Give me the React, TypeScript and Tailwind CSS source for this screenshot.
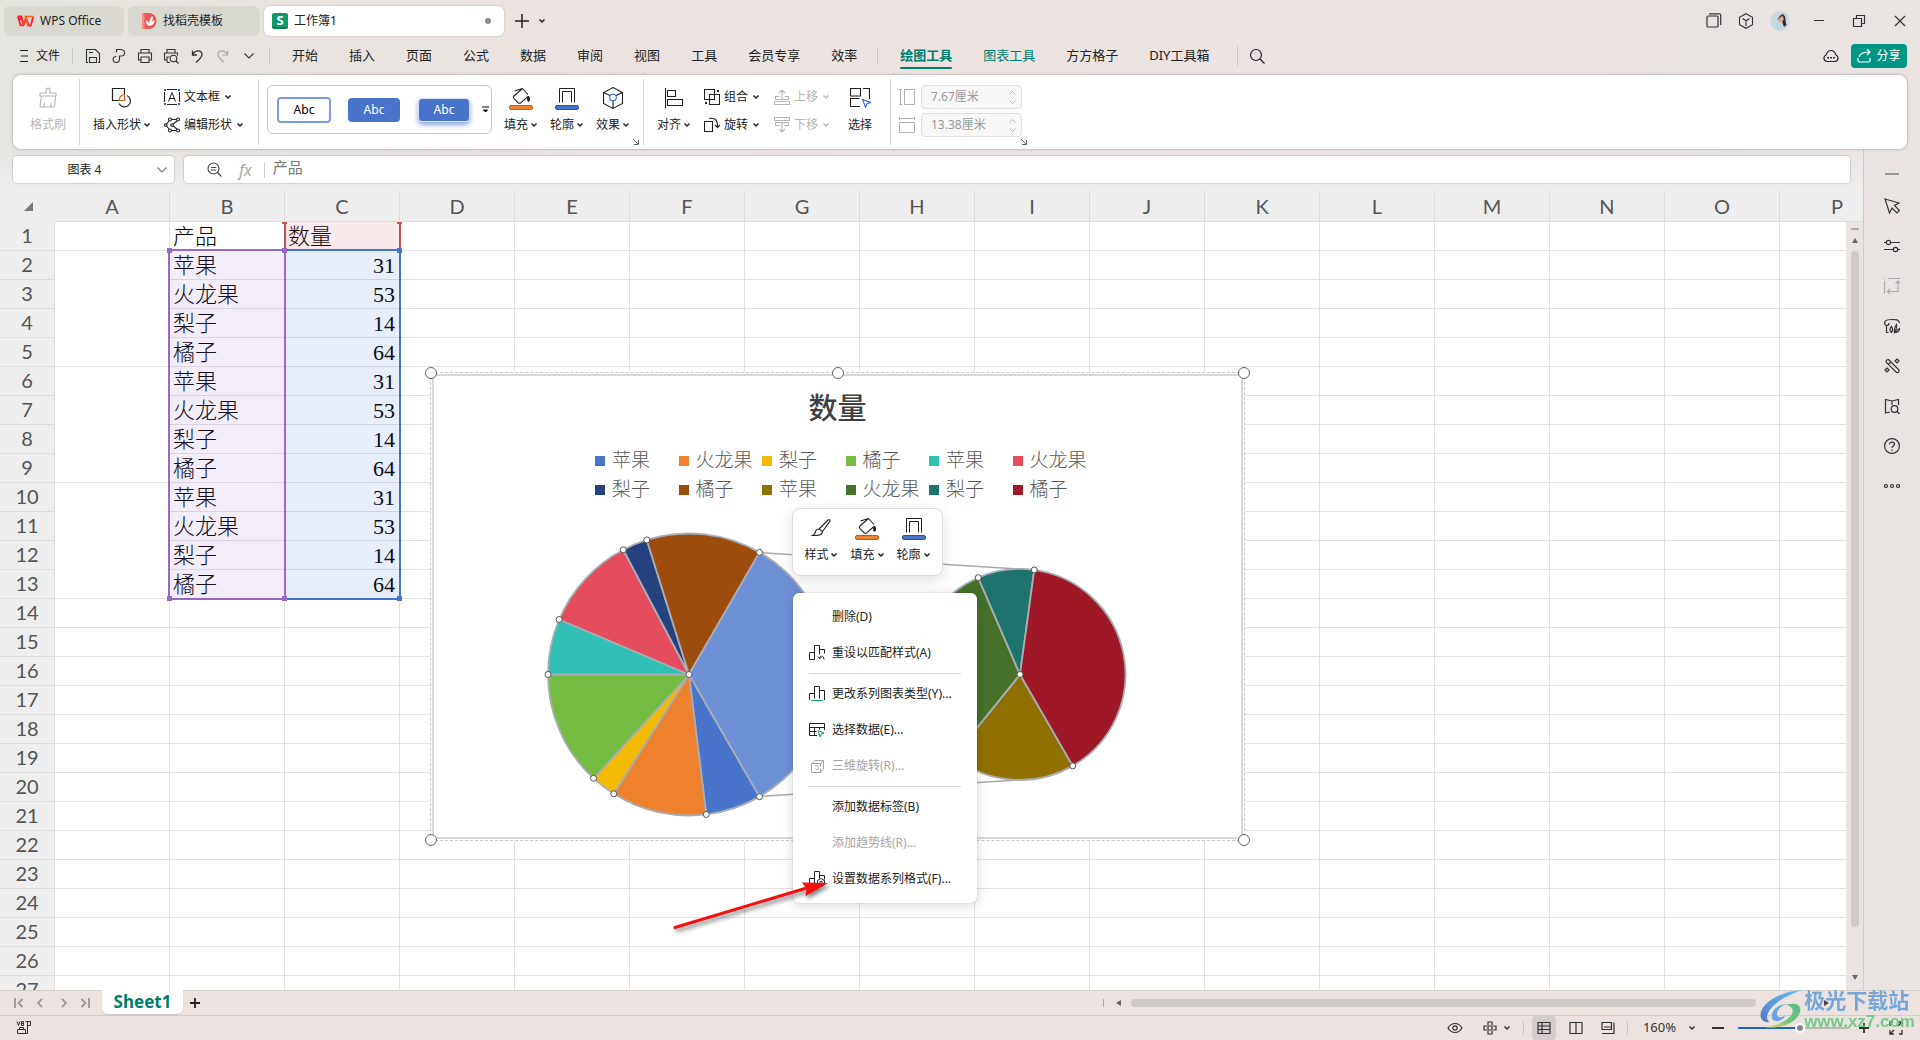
import type { ReactNode } from "react";
import { useState } from "react";

const COLUMNS = ["A", "B", "C", "D", "E", "F", "G", "H", "I", "J", "K", "L", "M", "N", "O", "P"];
const ROWS = Array.from({ length: 27 }, (_, i) => i + 1);
const FRUITS: [string, number][] = [
    ["苹果", 31],
    ["火龙果", 53],
    ["梨子", 14],
    ["橘子", 64],
];
const COLORS = [
    "#4874cb", "#ee822f", "#f2ba02", "#75bd42", "#30c0b4", "#e54c5e",
    "#25417f", "#9c4c0d", "#907000", "#457128", "#1e736c", "#9e1827",
];
const MENUS = ["开始", "插入", "页面", "公式", "数据", "审阅", "视图", "工具", "会员专享", "效率"];

type IconProps = { w?: number; h?: number; className?: string; sw?: number; children: ReactNode };

const Icon = ({ w = 16, h = w, className = "", sw = 1, children }: IconProps) => (
    <svg
        width={w}
        height={h}
        viewBox={`0 0 ${w} ${h}`}
        fill="none"
        stroke="currentColor"
        strokeWidth={sw}
        className={`shrink-0 ${className}`}
        aria-hidden="true"
    >
        {children}
    </svg>
);

const Chevron = () => (
    <Icon w={8} h={6} sw={1.5}>
        <path d="M1.5 1.5 4 4l2.5-2.5" />
    </Icon>
);

const WideChevron = () => (
    <Icon w={12} h={8} sw={1.1}>
        <path d="m1.5 1.5 4.5 4.5 4.5-4.5" />
    </Icon>
);

const Launcher = ({ className }: { className: string }) => (
    <button aria-label="更多选项" className={`absolute text-[#666] ${className}`}>
        <Icon w={6}>
            <path d="m0 0 5 5M5.5 1v4.5H1" />
        </Icon>
    </button>
);

/* ---------- title bar ---------- */

const TitleBar = () => (
    <header className="flex shrink-0 items-center pt-[6px] pl-1 text-xs text-[#222]">
        <button className="flex h-[30px] w-[120px] items-center gap-1.5 rounded-md bg-[#dad9d1] pl-[13px]">
            <Icon w={17} h={12}>
                <path d="M0.8 1.5h3.6l2 8.5M4.4 1.5 3 5M0.8 1.5 3.6 10.3h2.8L9 3.5l2.4 7h2.4l2.4-9" stroke="#f5222d" strokeWidth="1.8" />
                <path d="M5.5 10.3 9 2.2l3 8M7.6 1.5h8.6" stroke="#ff5a1f" strokeWidth="1.5" />
            </Icon>
            <span>WPS Office</span>
        </button>
        <button className="ml-1 flex h-[30px] w-[132px] items-center gap-1.5 rounded-md bg-[#dad9d1] pl-3.5">
            <Icon w={15} h={16} sw={0}>
                <path d="M0 0h7a7.5 8 0 0 1 0 16H0z" fill="#ef5558" />
                <path d="M0 0h2.5v16H0z" fill="#f58f8f" />
                <path d="M7.5 13C4.5 12 3.5 9.5 4 7.5c2 .5 3 2 3.5 3.5C7 8 8 4.5 10.500 3c.8 2 .3 4-1 6 1-1 2.200-1.500 3.200-1.400-.2 3-2 5-5.200 5.400z" fill="#fff" />
            </Icon>
            <span>找稻壳模板</span>
        </button>
        <div className="ml-1 flex h-[30px] w-[240px] items-center rounded-md bg-white pr-[13px] pl-2 shadow-[0_0_2px_rgba(0,0,0,0.25)]">
            <span className="flex size-4 items-center justify-center rounded-xs border-b-2 border-[#0b7a50] bg-[#12996a] text-[13px] leading-3 font-bold text-white">
                S
            </span>
            <span className="ml-1.5 flex-1">工作簿1</span>
            <span className="size-1.5 rounded-full bg-[#8c8c8c]" />
        </div>
        <button aria-label="新建" className="ml-[11px]">
            <Icon w={14} sw={1.5}>
                <path d="M7 0v14M0 7h14" />
            </Icon>
        </button>
        <button aria-label="标签列表" className="ml-[9px]">
            <Chevron />
        </button>
        <div className="ml-auto flex items-center pr-[14px] text-[#333]">
            <button aria-label="窗口">
                <Icon w={16} sw={1.2}>
                    <rect x="1" y="3" width="11" height="11" rx="1" />
                    <path d="M3 .8h10.500a1.200 1.200 0 0 1 1.200 1.200v10" />
                </Icon>
            </button>
            <button aria-label="应用" className="ml-4">
                <Icon w={16} sw={1.1}>
                    <path d="M8 .7 14.500 4.300v7.400L8 15.300 1.500 11.700V4.300zM4.500 5.500 8 7.800l3.500-2.300M8 7.800V13" />
                </Icon>
            </button>
            <button aria-label="账户" className="ml-4">
                <Icon w={20} sw={0}>
                    <circle cx="10" cy="10" r="10" fill="#cdd9e1" />
                    <path d="M11 4c4-1 5 3 4.500 6l1 4-2.500 2-2.500-7z" fill="#33272c" />
                    <path d="M10 5c3-1 4 1 3.500 4l-2 2.500-3.500-1z" fill="#d9a99b" />
                    <path d="M10 4.500 13 3l1.500 1.500-3.500 1.200L7 9.500z" fill="#4a3a36" />
                    <path d="m7 10 4 2 2 7-8-1z" fill="#bfd6df" />
                </Icon>
            </button>
            <button aria-label="最小化" className="ml-6">
                <Icon w={10}>
                    <path d="M0 4.500h10" />
                </Icon>
            </button>
            <button aria-label="还原" className="ml-7">
                <Icon w={14} sw={1.2}>
                    <path d="M1.500 4.500h8v8h-8zM4.500 4.500v-3h8v8h-3" />
                </Icon>
            </button>
            <button aria-label="关闭" className="ml-7">
                <Icon w={12} sw={1.2}>
                    <path d="m1 1 10 10M11 1 1 11" />
                </Icon>
            </button>
        </div>
    </header>
);

/* ---------- menu row ---------- */

const MenuRow = () => (
    <nav className="flex h-[39px] shrink-0 items-center text-[13px] text-[#222]">
        <button className="ml-5 flex items-center gap-2 text-xs">
            <Icon w={8} h={12}>
                <path d="M0 .5h8M1 6h7M0 11.500h8" />
            </Icon>
            文件
        </button>
        <span className="ml-3 h-4 w-px bg-[#c9c7c3]" />
        <div className="ml-3 flex items-center gap-2.5 text-[#333]">
            <button aria-label="保存">
                <Icon sw={1.1}>
                    <path d="M3 14.500H1.500V1.500h9L14.500 5.500v9H13M4.500 14.500v-5h7v5zM4 4.500h4" />
                </Icon>
            </button>
            <button aria-label="输出为PDF">
                <Icon sw={1.1}>
                    <path d="M5.500 4.500v-3h4.500c5 .5 4.500 6.500 0 6.500H8.500v3c0 4.500-6.500 4.500-6.500.500 0-2 1.500-3 3.500-3" />
                </Icon>
            </button>
            <button aria-label="打印">
                <Icon sw={1.1}>
                    <path d="M4 5V1.500h8V5M4 12H1.500V5h13v7H12M4 9h8v5.500H4z" />
                </Icon>
            </button>
            <button aria-label="打印预览">
                <Icon sw={1.1}>
                    <path d="M4 5V1.500h8V5M4 12H1.500V5h13v2.500M4 14.500V9h2.500M4 14.500h3" />
                    <circle cx="10.500" cy="10.500" r="3.300" />
                    <path d="m13 13 2.500 2.500" />
                </Icon>
            </button>
            <button aria-label="撤销">
                <Icon sw={1.3}>
                    <path d="M3.500 2.500v4.500H8M3.500 7C6 1.500 13 1.500 13 6.500c0 3-3.500 5.500-6 8" />
                </Icon>
            </button>
            <button aria-label="恢复" disabled className="text-[#aaa]">
                <Icon sw={1.2}>
                    <path d="M12.500 2.500v4.500H8M12.500 7C10 1.500 3 1.500 3 6.500c0 3 3.500 5.500 6 8" />
                </Icon>
            </button>
            <button aria-label="自定义" className="ml-0.5">
                <WideChevron />
            </button>
        </div>
        <span className="ml-3.5 h-4 w-px bg-[#c9c7c3]" />
        <div className="ml-[22px] flex gap-[31px]">
            {MENUS.map((m) => (
                <button key={m}>{m}</button>
            ))}
        </div>
        <span className="ml-5 h-4 w-px bg-[#c9c7c3]" />
        <div className="ml-[22px] flex items-center gap-[31px]">
            <button className="relative font-bold text-[#007d6c]">
                绘图工具
                <span className="absolute inset-x-0 -bottom-1 h-0.5 rounded-full bg-[#007d6c]" />
            </button>
            <button className="text-[#007d6c]">图表工具</button>
            <button>方方格子</button>
            <button>DIY工具箱</button>
        </div>
        <span className="ml-7 h-5 w-px bg-[#c9c7c3]" />
        <button aria-label="查找" className="ml-[11px]">
            <Icon sw={1.2}>
                <circle cx="7" cy="7" r="5.500" />
                <path d="m11 11 4.500 4.500" />
            </Icon>
        </button>
        <button aria-label="云文档" className="ml-auto">
            <Icon w={16} sw={1.2}>
                <path d="M4 13.500a3.400 3.400 0 0 1-1-6.500C4 4 6 2.500 8 2.500S12 4 13 7a3.400 3.400 0 0 1-1 6.500z" />
                <path d="M4.200 9.700h1.800M7.100 9.700h1.800M10 9.700h1.800" strokeWidth="1.600" />
            </Icon>
        </button>
        <button className="mr-[13px] ml-3 flex h-6 w-14 items-center justify-center gap-1 rounded-sm bg-[#009684] text-xs text-white">
            <Icon w={15} h={14} sw={1.2}>
                <path d="M2 8c1-4 5-5 11-5M10 .5 13 3l-3 3M1 9v2.500c0 1 .5 1.500 1.500 1.500h9c1 0 1.500-.5 1.500-1.500V9" />
            </Icon>
            分享
        </button>
    </nav>
);

/* ---------- ribbon ---------- */

type ToolProps = { icon: ReactNode; label: string; arrow?: boolean; disabled?: boolean };

const BigTool = ({ icon, label, arrow = true, disabled }: ToolProps) => (
    <button disabled={disabled} className="flex flex-col items-center text-[#222] disabled:text-[#b5b5b5]">
        <span className="flex h-[26px] items-center">{icon}</span>
        <span className="flex h-7 items-center gap-0.5">
            {label}
            {arrow && <Chevron />}
        </span>
    </button>
);

const SmallTool = ({ icon, label, disabled }: ToolProps) => (
    <button disabled={disabled} className="flex h-7 items-center gap-1 text-[#222] disabled:text-[#b5b5b5]">
        {icon}
        {label}
        <Chevron />
    </button>
);

const Divider = () => <span className="my-1 w-px shrink-0 bg-[#d4d4d4]" />;

const FillIcon = () => (
    <Icon w={26}>
        <path d="M14.500 3.500 6 11q-1.300 1.300 0 2.700l4 4q1.500 1.200 3 0L20 11.500M14.500 3.500 20 9.500M6.500 6 14.500 3.500" strokeWidth="1.100" />
        <path d="M20.500 11c1.500 2 1.500 5 0 5.500-1.500-.5-1.200-3 0-5.500z" fill="currentColor" />
        <rect x="1.500" y="20.500" width="23" height="4" rx="1.500" fill="#f0832f" stroke="#b9601c" />
    </Icon>
);

const OutlineIcon = () => (
    <Icon w={26}>
        <path d="M5.500 17.500v-14h15v14M8.500 17.500v-11h9v11" />
        <rect x="1.500" y="20.500" width="23" height="4" rx="1.500" fill="#4874cb" stroke="#30549b" />
    </Icon>
);

const ShapeGallery = () => (
    <div className="mt-2.5 ml-2 flex h-[49px] w-[225px] items-center rounded-md border border-[#c4c4c4] pl-[9px]">
        <button className="h-[26px] w-[54px] rounded-sm border-2 border-[#7d9cda] bg-white text-black">Abc</button>
        <button className="ml-[17px] h-6 w-[52px] rounded-sm bg-[#4874cb] text-white">Abc</button>
        <button className="ml-[18px] h-6 w-[52px] rounded-sm border border-[#dbe4f5] bg-[#4874cb] text-white shadow-[0_3px_5px_#8ea9dd]">
            Abc
        </button>
        <button aria-label="更多样式" className="ml-3">
            <Icon w={7} h={8}>
                <path d="M0 1h7" />
                <path d="m1.500 4 2 2 2-2z" fill="currentColor" />
            </Icon>
        </button>
    </div>
);

const SizeField = ({ id, label, value, icon }: { id: string; label: string; value: string; icon: ReactNode }) => (
    <div className="flex h-7 items-center">
        <label htmlFor={id} aria-label={label} className="mr-[6px] text-[#b0b0b0]">
            {icon}
        </label>
        <div className="flex h-6 w-[101px] items-center rounded-sm border border-[#e0e0e0] bg-[#f8f8f8] pr-[5px] pl-[9px]">
            <input id={id} disabled defaultValue={value} className="w-full min-w-0 bg-transparent text-xs text-[#999]" />
            <span className="flex flex-col gap-[5px] text-[#b5b5b5]">
                <button aria-label="增大" disabled>
                    <Icon w={7} h={4}>
                        <path d="m.5 3.500 3-3 3 3" />
                    </Icon>
                </button>
                <button aria-label="减小" disabled>
                    <Icon w={7} h={4}>
                        <path d="m.5.5 3 3 3-3" />
                    </Icon>
                </button>
            </span>
        </div>
    </div>
);

const Ribbon = () => (
    <div className="relative z-10 mx-[13px] flex h-[74px] shrink-0 rounded-lg bg-white text-xs shadow-[0_0_3px_rgba(0,0,0,0.35)]">
        <div className="flex w-[66px] justify-center pt-2.5 pl-1">
            <BigTool
                label="格式刷"
                arrow={false}
                disabled
                icon={
                    <Icon w={20} h={22} sw={1.1}>
                        <path d="M2 9V7q0-1 1-1h5.500l-.5-3c0-2.500 4-2.500 4 0l-.5 3H17q1 0 1 1v2zM3.500 9 2 19q0 1 1 1h12.500q1 0 1.200-1L17.500 9M6 20l.5-4M12.500 20l.8-4" />
                    </Icon>
                }
            />
        </div>
        <Divider />
        <div className="flex w-[178px] pt-2.5 pl-[13px]">
            <BigTool
                label="插入形状"
                icon={
                    <Icon w={22} h={22} sw={1.2}>
                        <path d="M8 13.500H1.500v-12h12V7M16 8.500a6 6 0 1 1-8 8" />
                        <path d="M13.500 7.500v6H8c0-3 2.500-6 5.500-6z" stroke="#d2561c" />
                    </Icon>
                }
            />
            <div className="-mt-0.5 ml-[13px] flex flex-col">
                <SmallTool
                    label="文本框"
                    icon={
                        <Icon>
                            <path d="M3 .5h10M3 15.500h10M.5 3v10M15.500 3v10M4.500 12.500 8 3.500l3.500 9M5.500 9.500h5" />
                            <path d="M0 0h2v2H0zM14 0h2v2h-2zM0 14h2v2H0zM14 14h2v2h-2z" fill="#2b5de0" stroke="none" />
                        </Icon>
                    }
                />
                <SmallTool
                    label="编辑形状"
                    icon={
                        <Icon sw={1.1}>
                            <circle cx="6" cy="2.500" r="1.500" />
                            <circle cx="14" cy="2.500" r="1.500" />
                            <circle cx="1.800" cy="8" r="1.300" />
                            <circle cx="8" cy="8" r="1.300" />
                            <circle cx="6" cy="13.500" r="1.500" />
                            <circle cx="14" cy="13.500" r="1.500" />
                            <path d="M7.500 2.500h5M7.500 13.500h5M5 4 2.500 7M5 12 2.500 9M13 4 9 7M13 12 9 9" />
                        </Icon>
                    }
                />
            </div>
        </div>
        <Divider />
        <div className="relative flex w-[384px]">
            <ShapeGallery />
            <div className="flex gap-3 pt-2.5 pl-3">
                <BigTool label="填充" icon={<FillIcon />} />
                <BigTool label="轮廓" icon={<OutlineIcon />} />
                <BigTool
                    label="效果"
                    icon={
                        <Icon w={26} sw={1.1}>
                            <path d="m13 2.500 9.500 5v11l-9.500 5-9.500-5v-11zM3.500 7.500l6.500 3M22.500 7.500l-6.500 3M13 23.500V16" />
                            <circle cx="13" cy="12.500" r="3.300" stroke="#2f62e8" />
                        </Icon>
                    }
                />
            </div>
            <Launcher className="right-1 bottom-1" />
        </div>
        <Divider />
        <div className="flex w-[246px] pt-2.5 pl-[13px]">
            <BigTool
                label="对齐"
                icon={
                    <Icon w={20} h={20} sw={1.1}>
                        <path d="M1.500 0v20M3.500 2.500h8v6h-8zM3.500 11.500h15v6h-15z" />
                    </Icon>
                }
            />
            <div className="-mt-0.5 ml-[13px] flex flex-col">
                <SmallTool
                    label="组合"
                    icon={
                        <Icon sw={1.1}>
                            <path d="M.5.500h10v10H.5zM5.500 5.500h10v10h-10z" />
                            <path d="M13 1h2v2h-2zM1 13h2v2H1z" fill="currentColor" stroke="none" />
                        </Icon>
                    }
                />
                <SmallTool
                    label="旋转"
                    icon={
                        <Icon sw={1.1}>
                            <path d="M.5 4.500h8v10h-8zM5 1.500c6-1 8.500 1 8.500 8M11 8l2.500 2.500L16 8" />
                        </Icon>
                    }
                />
            </div>
            <div className="-mt-0.5 ml-3.5 flex flex-col">
                <SmallTool
                    label="上移"
                    disabled
                    icon={
                        <Icon sw={1.1}>
                            <path d="M.5 12.500h15v3H.5zM5.500 7.500h-4v3h13v-3h-4M8 10V1M5 4l3-3 3 3" />
                        </Icon>
                    }
                />
                <SmallTool
                    label="下移"
                    disabled
                    icon={
                        <Icon sw={1.1}>
                            <path d="M.5.500h15v3H.5zM5.500 8.500h-4v-3h13v3h-4M8 6v9M5 12l3 3 3-3" />
                        </Icon>
                    }
                />
            </div>
            <div className="ml-[18px] flex flex-col">
                <BigTool
                    label="选择"
                    arrow={false}
                    icon={
                        <Icon w={22} h={20} sw={1.1}>
                            <path d="M1.500 8V.500h10V8zM14 .500h6.500V11M11 18.500H1.500v-8h9" />
                            <path d="m13.500 11.500 8 3-3.500 1.200-1.500 3.500z" stroke="#2f62e8" />
                        </Icon>
                    }
                />
            </div>
        </div>
        <Divider />
        <div className="relative flex w-[136px] flex-col pt-2 pl-2">
            <SizeField
                id="shape-height"
                label="高度"
                value="7.67厘米"
                icon={
                    <Icon>
                        <path d="M5.500.500h10v15h-10zM0 .500h3M0 15.500h3M1.500 0v16" />
                    </Icon>
                }
            />
            <SizeField
                id="shape-width"
                label="宽度"
                value="13.38厘米"
                icon={
                    <Icon>
                        <path d="M.5 5.500h15v10H.5zM.5 0v3M15.500 0v3M0 1.500h16" />
                    </Icon>
                }
            />
            <Launcher className="right-0 bottom-1" />
        </div>
    </div>
);

/* ---------- formula bar ---------- */

const FormulaBar = () => (
    <div className="flex h-[42px] shrink-0 gap-2.5 bg-linear-to-b from-transparent to-[#eeeeee] pt-[7px] pr-[13px] pl-[13px]">
        <div className="flex h-[27px] w-[161px] items-center rounded-sm bg-white pr-1.5 text-[#222] shadow-[0_0_1px_1px_rgba(0,0,0,0.12)]">
            <input aria-label="名称框" defaultValue="图表 4" className="w-full min-w-0 text-center text-xs" />
            <button aria-label="名称列表" className="text-[#777]">
                <WideChevron />
            </button>
        </div>
        <div className="flex h-[27px] flex-1 items-center rounded-sm bg-white pl-[23px] shadow-[0_0_1px_1px_rgba(0,0,0,0.12)]">
            <button aria-label="搜索公式" className="text-[#444]">
                <Icon sw={1.1}>
                    <circle cx="6.500" cy="6.500" r="5.500" />
                    <path d="m10.500 10.500 4 4M4 5.500h5M4 8h5" />
                </Icon>
            </button>
            <button aria-label="插入函数" className="ml-4 text-[16px] leading-5 text-[#aaa] italic">
                fx
            </button>
            <span className="ml-3 h-4 w-px bg-[#ccc]" />
            <input aria-label="编辑栏" defaultValue="产品" className="ml-2 h-5 flex-1 pb-1 text-[15px] text-[#777]" />
        </div>
    </div>
);

/* ---------- chart ---------- */

const polar = (cx: number, cy: number, r: number, deg: number) => {
    const a = (deg * Math.PI) / 180;
    return [cx + r * Math.cos(a), cy + r * Math.sin(a)];
};

type Slice = { from: number; to: number; color: string };

const buildSlices = (start: number, sweep: number, values: number[], colors: string[]): Slice[] => {
    const total = values.reduce((a, b) => a + b, 0);
    let at = start;
    return values.map((v, i) => {
        const from = at;
        at += (v / total) * sweep;
        return { from, to: at, color: colors[i] };
    });
};

const Pie = ({ cx, cy, r, slices }: { cx: number; cy: number; r: number; slices: Slice[] }) => (
    <g>
        {slices.map((s) => {
            const [x1, y1] = polar(cx, cy, r, s.from);
            const [x2, y2] = polar(cx, cy, r, s.to);
            return (
                <path
                    key={s.color}
                    d={`M${cx} ${cy}L${x1} ${y1}A${r} ${r} 0 0 1 ${x2} ${y2}Z`}
                    fill={s.color}
                    stroke="#a9adb5"
                    strokeWidth="1.8"
                    strokeLinejoin="round"
                />
            );
        })}
        {slices.map((s) => {
            const [x, y] = polar(cx, cy, r, s.from);
            return <circle key={s.color} cx={x} cy={y} r="3" fill="#fff" stroke="#555" />;
        })}
        <circle cx={cx} cy={cy} r="3" fill="#fff" stroke="#555" />
    </g>
);

const values = FRUITS.map((f) => f[1]);
const mainSlices = [
    ...buildSlices(60, 240, [...values, ...values], COLORS.slice(0, 8)),
    { from: 300, to: 420, color: "#6d8fd5" },
];
const subSlices = buildSlices(60, 360, values, COLORS.slice(8));

const Handle = ({ className }: { className: string }) => (
    <span className={`absolute size-3 rounded-full border border-[#666] bg-white ${className}`} />
);

const Chart = () => (
    <section className="absolute top-[181px] left-[430px] h-[469px] w-[815px] border border-dashed border-[#c8c8c8] bg-white p-px">
        <div className="flex h-full flex-col items-center border-2 border-[#d9d9d9]">
            <h2 className="mt-[13px] text-[29px] leading-10 font-medium text-[#404040]">数量</h2>
            <ul className="mt-[17px] ml-4 grid w-[501px] grid-cols-6 text-[19px] leading-[29px] font-light text-[#595959]">
                {COLORS.map((c, i) => (
                    <li key={c} className="flex items-center gap-[7px] whitespace-nowrap">
                        <span className="size-2.5 shrink-0" style={{ backgroundColor: c }} />
                        {FRUITS[i % 4][0]}
                    </li>
                ))}
            </ul>
            <svg width="807" height="330" viewBox="434 505 807 330" className="mt-px overflow-visible">
                <path d="M760 552.500 1034 570M760 796.500 1034 779" stroke="#a9a9a9" strokeWidth="1.500" />
                <Pie cx={689} cy={674.5} r={141} slices={mainSlices} />
                <Pie cx={1020} cy={674.5} r={105.5} slices={subSlices} />
            </svg>
        </div>
        <Handle className="-top-1.5 -left-1.5" />
        <Handle className="-top-1.5 left-1/2 -translate-x-1/2" />
        <Handle className="-top-1.5 -right-1.5" />
        <Handle className="-bottom-1.5 -left-1.5" />
        <Handle className="-right-1.5 -bottom-1.5" />
    </section>
);

/* ---------- popups over the chart ---------- */

const MiniToolbar = () => (
    <div className="absolute top-[317px] left-[792px] flex h-[68px] w-[151px] justify-center gap-3 rounded-lg border border-[#dcdcdc] bg-white pt-1.5 text-xs shadow-[0_4px_14px_rgba(0,0,0,0.12)]">
        <BigTool
            label="样式"
            icon={
                <Icon w={22} h={22} sw={1.1}>
                    <path d="M9 12 18 3q2-1 2 1l-7.500 10.500M9 12l3.500 2.500q0 4.500-10 4 3-1.500 3-4 .5-2.500 3.500-2.500z" />
                </Icon>
            }
        />
        <BigTool label="填充" icon={<FillIcon />} />
        <BigTool label="轮廓" icon={<OutlineIcon />} />
    </div>
);

const MenuItem = ({ label, icon, disabled }: { label: string; icon?: ReactNode; disabled?: boolean }) => (
    <li>
        <button disabled={disabled} className="flex h-9 w-full items-center pl-4 text-[#222] disabled:text-[#a5a5a5]">
            <span className="mr-[7px] w-4">{icon}</span>
            {label}
        </button>
    </li>
);

const MenuLine = () => <li className="mx-4 mt-0.5 h-[3px] border-t border-[#d9d9d9]" />;

const ContextMenu = () => (
    <ul className="absolute top-[402px] left-[793px] w-[184px] rounded-md bg-white py-1.5 text-xs shadow-[0_2px_12px_rgba(0,0,0,0.16),0_0_1px_rgba(0,0,0,0.4)]">
        <MenuItem label="删除(D)" />
        <MenuItem
            label="重设以匹配样式(A)"
            icon={
                <Icon>
                    <path d="M5.500 14.500h-5v-7h5M5.500 15V.5h5v9M10.500 4.500h5v4M9 11.500l1.500 2 2-1M10.500 13.500c.5-3.500 4.500-3 4.500 1" />
                </Icon>
            }
        />
        <MenuLine />
        <MenuItem
            label="更改系列图表类型(Y)..."
            icon={
                <Icon>
                    <path d="M.5 14v-6.500h5M5.500 12.500V.5h5v12M10.500 4.500h5V14" />
                    <path d="M2.500 14.500h11" stroke="#12996a" />
                </Icon>
            }
        />
        <MenuItem
            label="选择数据(E)..."
            icon={
                <Icon>
                    <path d="M8 13.500H.5V1.500h15V8M.5 5.500h15M.5 9.500h7M5.500 5.500v8M10.500 5.500v2" />
                    <path d="m9 8.500 6 2.500-2.700 1-1 3z" stroke="#12996a" />
                </Icon>
            }
        />
        <MenuItem
            label="三维旋转(R)..."
            disabled
            icon={
                <Icon>
                    <path d="M2.500 5.500 6 2.500h8.500V11l-3 3.500h-9zM2.500 5.500h9v3M14.500 2.500l-3 3M6 8.500c2-1.500 4-.5 3.500 1.500s-3 2-3.500.5M11.500 14.500V11" />
                </Icon>
            }
        />
        <MenuLine />
        <MenuItem label="添加数据标签(B)" />
        <MenuItem label="添加趋势线(R)..." disabled />
        <MenuItem
            label="设置数据系列格式(F)..."
            icon={
                <Icon>
                    <path d="M.5 15v-7.500h5M5.500 15V.5h5v7M10.500 4.500h5v4" />
                    <path d="m12 7.500 3.500 2v4L12 15.500l-3.500-2v-4z" />
                    <circle cx="12" cy="11.500" r="1.200" />
                </Icon>
            }
        />
    </ul>
);

const RedArrow = () => (
    <svg
        width="170"
        height="60"
        viewBox="665 875 170 60"
        className="pointer-events-none absolute top-[683px] left-[665px] drop-shadow-[2px_3px_2px_rgba(0,0,0,0.5)]"
        aria-hidden="true"
    >
        <path d="M675 928.500 805 889.500" stroke="#f50f0f" strokeWidth="3" strokeLinecap="round" />
        <path d="m828 884-26-.5 4.500 6-1 7.500z" fill="#f50f0f" />
    </svg>
);

/* ---------- sheet ---------- */

const cellText = (col: string, row: number) => {
    if (row > 13) return "";
    if (col === "B") return row === 1 ? "产品" : FRUITS[(row - 2) % 4][0];
    if (col === "C") return row === 1 ? "数量" : FRUITS[(row - 2) % 4][1];
    return "";
};

const Grid = () => (
    <table className="w-[1895px] table-fixed border-separate border-spacing-0">
        <colgroup>
            <col className="w-[55px]" />
            {COLUMNS.map((c) => (
                <col key={c} className="w-[115px]" />
            ))}
        </colgroup>
        <thead className="bg-[#eeeeee] font-[Lato] text-xl text-[#555]">
            <tr className="h-[31px]">
                <th className="p-0">
                    <svg width="9" height="9" className="ml-6" aria-hidden="true">
                        <path d="M9 0v9H0z" fill="#777" />
                    </svg>
                </th>
                {COLUMNS.map((c) => (
                    <th key={c} className="border-r border-b border-[#dcdcdc] p-0 font-normal">
                        {c}
                    </th>
                ))}
            </tr>
        </thead>
        <tbody>
            {ROWS.map((r) => (
                <tr key={r} className="h-[29px]">
                    <th className="border-r border-b border-[#dcdcdc] bg-[#eeeeee] p-0 align-top font-[Lato] text-xl leading-[26px] font-normal text-[#555]">
                        {r}
                    </th>
                    {COLUMNS.map((c) => {
                        // A2:A13 is merged in blocks of four rows
                        const merged = c === "A" && r > 1 && r < 14;
                        if (merged && (r - 2) % 4 !== 0) return null;
                        return (
                            <td
                                key={c}
                                rowSpan={merged ? 4 : 1}
                                className={`border-r border-b border-[#e2e2e2] pt-0.5 pr-1 pb-0 pl-[3px] align-top text-[22px] leading-[26px] font-light whitespace-nowrap text-black ${
                                    c === "C" && r > 1 ? "text-right" : "text-left"
                                }`}
                            >
                                {cellText(c, r)}
                            </td>
                        );
                    })}
                </tr>
            ))}
        </tbody>
    </table>
);

const Ranges = () => (
    <>
        <div className="absolute top-[31px] left-[284px] h-[28px] w-[117px] border-x-2 border-[#c8504f] bg-[#c8504f]/12" />
        <div className="absolute top-[58px] left-[284px] h-[351px] w-[117px] border-2 border-[#4472d0] bg-[#4472d0]/12" />
        <div className="absolute top-[58px] left-[168px] h-[351px] w-[118px] border-2 border-[#9768c4] bg-[#9768c4]/12" />
        <span className="absolute top-[57px] left-[167px] size-[5px] bg-[#9768c4]" />
        <span className="absolute top-[57px] left-[282px] size-[5px] bg-[#9768c4]" />
        <span className="absolute top-[405px] left-[167px] size-[5px] bg-[#9768c4]" />
        <span className="absolute top-[405px] left-[282px] size-[5px] bg-[#9768c4]" />
        <span className="absolute top-[57px] left-[397px] size-[5px] bg-[#4472d0]" />
        <span className="absolute top-[405px] left-[397px] size-[5px] bg-[#4472d0]" />
        <span className="absolute top-[31px] left-[282px] h-0.5 w-[5px] bg-[#c8504f]" />
        <span className="absolute top-[31px] left-[397px] h-0.5 w-[5px] bg-[#c8504f]" />
    </>
);

const Sheet = () => (
    <div className="flex min-h-0 flex-1">
        <div className="relative min-w-0 flex-1 overflow-hidden bg-white font-['Liberation_Serif','Noto_Sans_CJK_SC',serif]">
            <Grid />
            <Ranges />
            <Chart />
            <div className="font-['Noto_Sans','Noto_Sans_CJK_SC',sans-serif]">
                <MiniToolbar />
                <ContextMenu />
            </div>
            <RedArrow />
        </div>
        <div className="flex w-[17px] shrink-0 flex-col items-center text-[#666]">
            <span className="h-[31px] w-full shrink-0 border-b border-[#dcdcdc] bg-[#eeeeee]" />
            <span className="mt-1.5 h-0.5 w-2 bg-[#b3aeac]" />
            <svg width="6" height="5" className="mt-2 shrink-0" aria-hidden="true">
                <path d="M3 0l3 5H0z" fill="#666" />
            </svg>
            <span className="mt-2 mb-12 w-2 flex-1 rounded-full bg-[#cfcac8]" />
            <svg width="6" height="5" className="mb-2.5 shrink-0" aria-hidden="true">
                <path d="M0 0h6L3 5z" fill="#666" />
            </svg>
        </div>
    </div>
);

const SheetTabs = () => (
    <div className="flex h-[26px] shrink-0 border-y border-[#d3cdca] bg-[#ece3e0]">
        <div className="flex w-[102px] items-center gap-3 pl-[14px] text-[#999]">
            <button aria-label="第一张">
                <Icon w={10} sw={1.8}>
                    <path d="M1 0v10M8.500 1 4.500 5l4 4" />
                </Icon>
            </button>
            <button aria-label="上一张">
                <Icon w={8} h={10} sw={1.8}>
                    <path d="M6 1 2 5l4 4" />
                </Icon>
            </button>
            <button aria-label="下一张" className="ml-1">
                <Icon w={8} h={10} sw={1.8}>
                    <path d="m2 1 4 4-4 4" />
                </Icon>
            </button>
            <button aria-label="最后一张">
                <Icon w={10} sw={1.8}>
                    <path d="M9 0v10M1.500 1l4 4-4 4" />
                </Icon>
            </button>
        </div>
        <button className="-mt-px h-6 w-[81px] rounded-b-md bg-white text-[17px] leading-6 font-bold text-[#007d6c] shadow-[0_1px_1px_rgba(0,0,0,0.12)]">
            Sheet1
        </button>
        <button aria-label="新建工作表" className="ml-[7px] text-[#222]">
            <Icon w={10} sw={1.8}>
                <path d="M5 0v10M0 5h10" />
            </Icon>
        </button>
        <div className="ml-auto flex w-[817px] items-center">
            <span className="h-2 w-px bg-[#aaa]" />
            <svg width="5" height="6" className="mr-2.5 ml-3" aria-hidden="true">
                <path d="M5 0v6L0 3z" fill="#666" />
            </svg>
            <span className="h-2 flex-1 rounded-full bg-[#cfcac7]" />
            <svg width="5" height="6" className="mr-[91px] ml-[68px]" aria-hidden="true">
                <path d="M0 0v6l5-3z" fill="#444" />
            </svg>
        </div>
    </div>
);

/* ---------- right side bar ---------- */

const SIDE_ICONS: { label: string; art: ReactNode; muted?: boolean }[] = [
    { label: "选择", art: <path d="m1 1 14 4-4.500 2.500 5 5-2.500 2.500-5-5L5.500 15z" /> },
    {
        label: "属性",
        art: (
            <>
                <path d="M0 4.500h2.500M7 4.500h9M0 11.500h9M14 11.500h2" />
                <circle cx="4.500" cy="4.500" r="2.200" />
                <circle cx="11.500" cy="11.500" r="2.200" />
            </>
        ),
    },
    {
        label: "版式",
        muted: true,
        art: <path d="M4 .5h12M.5 0v1M.5 3v12.500M14 3v10.500H4M11.500 5.500 14 3l2 2.500M6 11l-2.500 2.500L6 16" />,
    },
    {
        label: "素材",
        art: (
            <>
                <path d="M4.500 14.500h-2v-7C.5 7 0 4.500 1.500 3 2.500 1.500 4 1.500 8 1.500c4 0 7 0 7.500 3.500M2.500 7.500c2 0 2.500-1 2.500-2.500" />
                <path d="M7.500 14.500c-2-2-1.500-4.500 0-6 1 1.500 1.500 4 0 6zM10.500 14.500c-1-4 .5-6 2-8 .5 3 0 5-2 8zM11.500 14.500c1-2 2-3.500 4-4 0 2-1.500 4-4 4z" />
            </>
        ),
    },
    {
        label: "美化",
        art: (
            <>
                <path d="m4.500 1.500 10.500 10.500q.5 3-2.500 2.500L2 4q0-2.500 2.500-2.500zM4.500 6.500l2.500-2.500" />
                <path d="m13 1 2 2-2 2-2-2zM3 10l2 2-2 2-2-2z" />
            </>
        ),
    },
    {
        label: "查阅",
        art: (
            <>
                <path d="M6 14 1.500 15V1.500L8 3l6.500-1.500V7M8 3v4" />
                <circle cx="10.500" cy="11" r="3.300" />
                <path d="m13 13.500 2.500 2.500" />
            </>
        ),
    },
    {
        label: "帮助",
        art: (
            <>
                <circle cx="8" cy="8" r="7.400" />
                <path d="M5.500 6.500c0-3.500 5-3 5-.2C10.500 8 8 8 8 10M8 11.500v1.500" />
            </>
        ),
    },
    {
        label: "更多",
        art: (
            <>
                <circle cx="2" cy="8" r="1.500" />
                <circle cx="8" cy="8" r="1.500" />
                <circle cx="14" cy="8" r="1.500" />
            </>
        ),
    },
];

const SideBar = () => (
    <aside className="flex w-[57px] shrink-0 flex-col items-center border-l border-[#cfcac8] text-[#333]">
        <span className="mt-6 h-0.5 w-3.5 bg-[#999]" />
        <div className="mt-[23px] flex flex-col gap-6">
            {SIDE_ICONS.map((s) => (
                <button key={s.label} aria-label={s.label} className={s.muted ? "text-[#aaa]" : ""}>
                    <Icon sw={1.2}>{s.art}</Icon>
                </button>
            ))}
        </div>
    </aside>
);

/* ---------- status bar ---------- */

const StatusBar = () => {
    const [zoom, setZoom] = useState(56);

    return (
        <footer className="flex h-6 shrink-0 items-center bg-[#ece3e0] pl-4 text-[13px] text-[#333]">
            <button aria-label="宏">
                <Icon w={16} h={14}>
                    <path d="m1 .5 1.500 4L4 .5M5.500.5h2v4h-2zM5.500 2.500h2M9.500.5h5v4h-3M11.500.5v12h-10v-4h8v4M3.500 8.500v-2h4v2" />
                </Icon>
            </button>
            <div className="ml-auto flex items-center">
                <button aria-label="护眼模式">
                    <Icon w={16} sw={1.2}>
                        <path d="M1 8c3.500-6 10.500-6 14 0-3.500 6-10.500 6-14 0z" />
                        <circle cx="8" cy="8" r="2.200" />
                    </Icon>
                </button>
                <button aria-label="阅读模式" className="ml-5 flex items-center gap-1.5">
                    <Icon w={14} sw={1.2}>
                        <path d="M5 4V1h4v3M5 10v3h4v-3M4 5H1v4h3M10 5h3v4h-3M5 5h4v4H5z" />
                    </Icon>
                    <Chevron />
                </button>
                <span className="mr-2 ml-3 h-3.5 w-px bg-[#c9c4c1]" />
                <button aria-label="普通视图" className="flex size-6 items-center justify-center rounded-sm bg-[#d3cccb]">
                    <Icon w={14} sw={1.2}>
                        <path d="M1 1.500h12v11H1zM1 5h12M1 8.500h12M5 1.500v11" />
                    </Icon>
                </button>
                <button aria-label="分页预览" className="ml-[13px]">
                    <Icon w={14} sw={1.2}>
                        <path d="M1 1.500h12v11H1zM7 1.500v11" />
                    </Icon>
                </button>
                <button aria-label="页面布局" className="ml-[18px]">
                    <Icon w={14} sw={1.2}>
                        <path d="M1 1.500h9.500v7H1zM13 1.500v11H1M3 6h7" />
                    </Icon>
                </button>
                <span className="ml-3 h-3.5 w-px bg-[#c9c4c1]" />
                <button className="ml-[15px] flex items-center gap-3">
                    160% <Chevron />
                </button>
                <button aria-label="缩小" className="ml-4">
                    <Icon w={12} sw={2}>
                        <path d="M0 6h12" />
                    </Icon>
                </button>
                <input
                    type="range"
                    aria-label="缩放"
                    min={0}
                    max={100}
                    value={zoom}
                    onChange={(e) => setZoom(Number(e.target.value))}
                    style={{ backgroundImage: `linear-gradient(to right, #1f5fc9 ${zoom}%, #bdb8b6 ${zoom}%)` }}
                    className="ml-3.5 h-0.5 w-[112px] appearance-none rounded-full [&::-webkit-slider-thumb]:size-2.5 [&::-webkit-slider-thumb]:appearance-none [&::-webkit-slider-thumb]:rounded-full [&::-webkit-slider-thumb]:border-2 [&::-webkit-slider-thumb]:border-white [&::-webkit-slider-thumb]:bg-[#888]"
                />
                <button aria-label="放大" className="ml-[9px]">
                    <Icon w={10} sw={1.8}>
                        <path d="M5 0v10M0 5h10" />
                    </Icon>
                </button>
                <button aria-label="全屏" className="mr-[17px] ml-5">
                    <Icon w={14} sw={1.3}>
                        <path d="M9 1h4v4M13 1 9 5M5 13H1V9M1 13l4-4M1 5V1h3M13 9v4h-3" />
                    </Icon>
                </button>
            </div>
        </footer>
    );
};

const Watermark = () => (
    <div className="pointer-events-none absolute right-[5px] bottom-2 flex items-center opacity-90">
        <svg width="44" height="42" viewBox="0 0 44 42" aria-hidden="true">
            <defs>
                <linearGradient id="wm-blue" x1="0" y1="1" x2="1" y2="0">
                    <stop offset="0" stopColor="#3f6fc4" />
                    <stop offset="1" stopColor="#58c2f0" />
                </linearGradient>
                <linearGradient id="wm-green" x1="0" y1="1" x2="1" y2="0">
                    <stop offset="0" stopColor="#f3d64c" />
                    <stop offset="0.5" stopColor="#62c06f" />
                    <stop offset="1" stopColor="#4fb98c" />
                </linearGradient>
            </defs>
            <path d="M43 1C20 2 1 14 .5 26c0 5 4 8 9 7C3 29 8 12 43 1z" fill="url(#wm-blue)" />
            <path d="M12 29c-2-8 8-15 18-14-8 0-14 6-13 11 1 3 6 3 8 0 0 5-11 9-13 3z" fill="#5b9be0" />
            <path d="M26 16c9-3 16 0 14 7C38 33 20 41 4 38c12-1 24-6 28-13 2-4 0-8-6-9z" fill="url(#wm-green)" />
        </svg>
        <div className="font-bold">
            <p className="text-[21px] leading-6 text-[#6a9fd8]">极光下载站</p>
            <p className="font-['Liberation_Sans',sans-serif] text-[17px] leading-5 text-[#6cc786]">www.xz7.com</p>
        </div>
    </div>
);

export default function App() {
    return (
        <div className="relative flex h-screen flex-col overflow-hidden bg-linear-to-r from-[#e5e4de] via-[#ede3e1] via-40% to-[#e9e4e1] font-['Noto_Sans','Noto_Sans_CJK_SC',sans-serif]">
            <TitleBar />
            <MenuRow />
            <Ribbon />
            <div className="flex min-h-0 flex-1">
                <main className="flex min-w-0 flex-1 flex-col">
                    <FormulaBar />
                    <Sheet />
                </main>
                <SideBar />
            </div>
            <SheetTabs />
            <StatusBar />
            <Watermark />
        </div>
    );
}
